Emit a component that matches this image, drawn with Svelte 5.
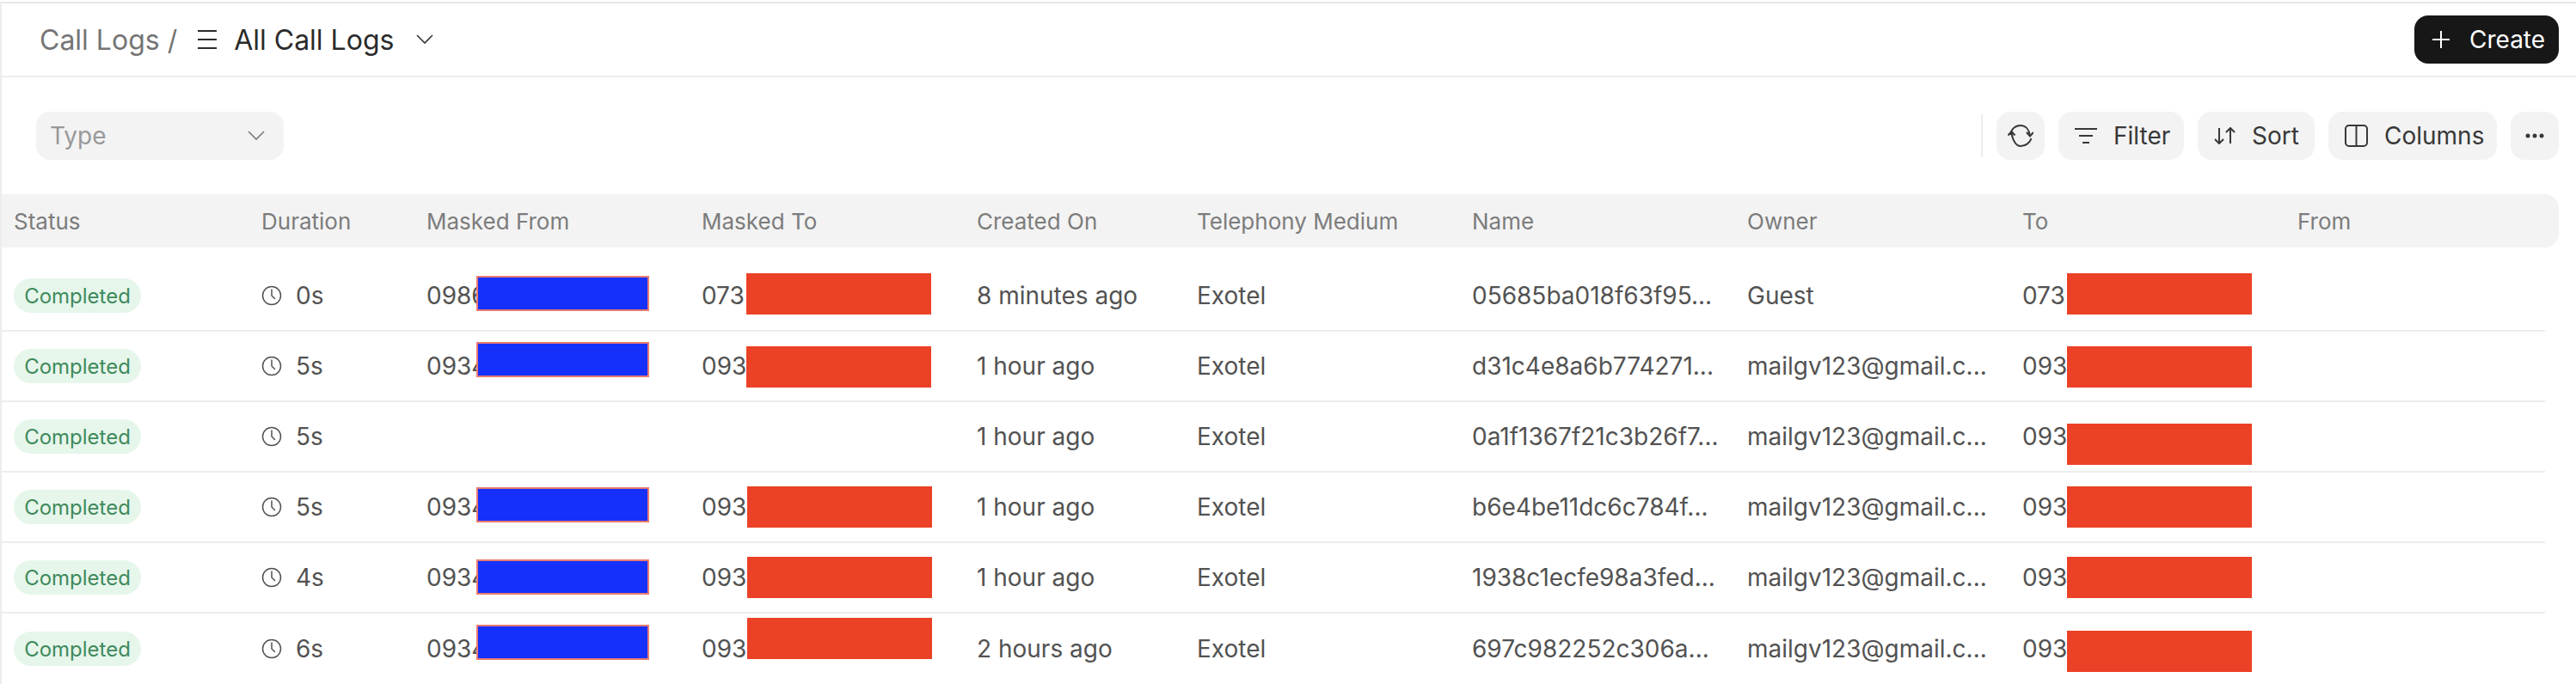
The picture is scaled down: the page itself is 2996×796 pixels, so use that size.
<script lang="ts">
  const columns = [
    { label: "Status", width: 288 },
    { label: "Duration", width: 192 },
    { label: "Masked From", width: 320 },
    { label: "Masked To", width: 320 },
    { label: "Created On", width: 256 },
    { label: "Telephony Medium", width: 320 },
    { label: "Name", width: 320 },
    { label: "Owner", width: 320 },
    { label: "To", width: 320 },
    { label: "From", width: 288 },
  ];

  const rows = [
    { dur: "0s", from: "0986", to: "073", own: "073", created: "8 minutes ago", name: "05685ba018f63f95...", owner: "Guest", fromTop: 17, toTop: 14, toLeft: 66, ownTop: 14 },
    { dur: "5s", from: "0934", to: "093", own: "093", created: "1 hour ago", name: "d31c4e8a6b774271...", owner: "mailgv123@gmail.c...", fromTop: 12, toTop: 17, toLeft: 66, ownTop: 17 },
    { dur: "5s", from: "", to: "", own: "093", created: "1 hour ago", name: "0a1f1367f21c3b26f7...", owner: "mailgv123@gmail.c...", fromTop: 0, toTop: 0, toLeft: 66, ownTop: 25 },
    { dur: "5s", from: "0934", to: "093", own: "093", created: "1 hour ago", name: "b6e4be11dc6c784f...", owner: "mailgv123@gmail.c...", fromTop: 17, toTop: 16, toLeft: 67, ownTop: 16 },
    { dur: "4s", from: "0934", to: "093", own: "093", created: "1 hour ago", name: "1938c1ecfe98a3fed...", owner: "mailgv123@gmail.c...", fromTop: 19, toTop: 16, toLeft: 67, ownTop: 16 },
    { dur: "6s", from: "0934", to: "093", own: "093", created: "2 hours ago", name: "697c982252c306a...", owner: "mailgv123@gmail.c...", fromTop: 13, toTop: 5, toLeft: 67, ownTop: 20 },
  ];
</script>

<div class="page">
  <header class="topbar">
    <div class="crumbs">
      <span class="crumb">Call Logs</span>
      <span class="crumb slash">/</span>
      <svg class="list-icon" width="22" height="22" viewBox="0 0 22 22" fill="none" stroke="#2b2b2b" stroke-width="2"><path d="M0 1h22M0 11h22M0 21h22" /></svg>
      <span class="view">All Call Logs</span>
      <svg class="chev" width="20" height="12" viewBox="0 0 20 12" fill="none" stroke="#383838" stroke-width="1.6"><path d="M1 1l9 9 9-9" /></svg>
    </div>
    <button class="create">
      <svg width="22" height="22" viewBox="0 0 22 22" fill="none" stroke="#fff" stroke-width="2"><path d="M11 1v20M1 11h20" /></svg>
      Create
    </button>
  </header>

  <div class="toolbar">
    <div class="select">
      <span>Type</span>
      <svg width="20" height="12" viewBox="0 0 20 12" fill="none" stroke="#7c7c7c" stroke-width="1.6"><path d="M1 1l9 9 9-9" /></svg>
    </div>
    <div class="actions">
      <div class="divider"></div>
      <button class="btn icon">
        <svg width="30" height="26" viewBox="0 0 30 26" fill="none" stroke="#383838" stroke-width="2"><path d="M3 12C4 5 9 1 15 1c6 0 10 5 11 12" /><path d="M4.500 8C5 18 10 25 15 25c6 0 11-4 12.500-9" /><path d="M22 9l4 4.500 4-4.500" /><path d="M0.500 12.500L4.500 8l4 4.500" /></svg>
      </button>
      <button class="btn filter">
        <svg width="26" height="18" viewBox="0 0 26 18" fill="none" stroke="#383838" stroke-width="2"><path d="M0 1h26M5 9h16M9 17h8" /></svg>
        Filter
      </button>
      <button class="btn sort">
        <svg width="25" height="20" viewBox="0 0 25 20" fill="none" stroke="#383838" stroke-width="2"><path d="M6 1v18M1 14l5 5 5-5" /><path d="M19 19V1M14 6l5-5 5 5" /></svg>
        Sort
      </button>
      <button class="btn cols">
        <svg width="27" height="26" viewBox="0 0 27 26" fill="none" stroke="#383838" stroke-width="2"><rect x="1" y="1" width="25" height="24" rx="4" /><path d="M13.500 1v24" /></svg>
        Columns
      </button>
      <button class="btn icon">
        <svg width="24" height="8" viewBox="0 0 24 8" fill="#383838"><circle cx="4" cy="4" r="2.500" /><circle cx="12" cy="4" r="2.500" /><circle cx="20" cy="4" r="2.500" /></svg>
      </button>
    </div>
  </div>

  <div class="table">
    <div class="head">
      {#each columns as col}
        <div class="head-cell" style="width: {col.width}px">{col.label}</div>
      {/each}
    </div>

    {#each rows as row}
      <div class="row">
        <div class="cell" style="width: 288px"><span class="pill">Completed</span></div>
        <div class="cell dur" style="width: 192px">
          <svg width="24" height="24" viewBox="0 0 24 24" fill="none" stroke="#525252" stroke-width="1.500" stroke-linecap="round"><circle cx="12" cy="12" r="10.500" /><path d="M12 5V12l3.500 3.500" /></svg>
          {row.dur}
        </div>
        <div class="cell" style="width: 320px">
          {row.from}
          {#if row.from}<span class="mask blue" style="top: {row.fromTop}px"></span>{/if}
        </div>
        <div class="cell" style="width: 320px">
          {row.to}
          {#if row.to}<span class="mask red" style="top: {row.toTop}px; left: {row.toLeft}px"></span>{/if}
        </div>
        <div class="cell" style="width: 256px">{row.created}</div>
        <div class="cell" style="width: 320px">Exotel</div>
        <div class="cell" style="width: 320px">{row.name}</div>
        <div class="cell" style="width: 320px">{row.owner}</div>
        <div class="cell" style="width: 320px">
          {row.own}
          <span class="mask red" style="top: {row.ownTop}px; left: 66px"></span>
        </div>
      </div>
    {/each}
  </div>
</div>

<style>
  :global(body) {
    background: #fff;
  }
  .page {
    width: 2996px;
    height: 794px;
    overflow: hidden;
    box-sizing: border-box;
    border-top: 2px solid #e8e8e8;
    margin-top: 2px;
    border-left: 2px solid #ededed;
    font-family: Inter, "Liberation Sans", sans-serif;
    color: #525252;
  }
  button {
    font-family: inherit;
    border: none;
    display: flex;
    align-items: center;
  }
  .topbar {
    height: 86px;
    box-sizing: border-box;
    border-bottom: 2px solid #ededed;
    display: flex;
    align-items: center;
    justify-content: space-between;
    padding: 0 20px 0 44px;
  }
  .crumbs {
    display: flex;
    align-items: center;
    font-size: 32px;
  }
  .crumb {
    color: #757575;
  }
  .slash {
    margin-left: 9px;
  }
  .list-icon {
    margin: 0 20px 0 24px;
  }
  .view {
    color: #2b2b2b;
  }
  .chev {
    margin-left: 26px;
  }
  .create {
    background: #171717;
    color: #fff;
    height: 56px;
    width: 168px;
    border-radius: 16px;
    font-size: 28px;
    gap: 22px;
    padding: 0 0 0 20px;
  }
  .toolbar {
    height: 96px;
    padding: 40px 20px 0 40px;
    display: flex;
    justify-content: space-between;
  }
  .select {
    width: 288px;
    height: 56px;
    background: #f3f3f3;
    border-radius: 16px;
    box-sizing: border-box;
    padding: 0 22px 0 16px;
    display: flex;
    align-items: center;
    justify-content: space-between;
    font-size: 28px;
    color: #999;
  }
  .actions {
    display: flex;
    align-items: center;
    gap: 16px;
    height: 56px;
  }
  .divider {
    width: 2px;
    height: 50px;
    background: #ededed;
  }
  .btn {
    height: 56px;
    background: #f3f3f3;
    border-radius: 16px;
    padding: 0 0 0 19px;
    gap: 19px;
    font-size: 28px;
    color: #383838;
  }
  .filter {
    width: 146px;
  }
  .sort {
    width: 136px;
  }
  .cols {
    width: 196px;
  }
  .btn.icon {
    width: 56px;
    padding: 0;
    justify-content: center;
  }
  .head {
    width: 2974px;
    height: 62px;
    background: #f3f3f3;
    border-radius: 0 16px 16px 0;
    display: flex;
    align-items: center;
    margin-bottom: 16px;
  }
  .head-cell {
    box-sizing: border-box;
    padding-left: 14px;
    font-size: 26px;
    color: #7c7c7c;
    flex: none;
  }
  .row {
    width: 2958px;
    height: 82px;
    box-sizing: border-box;
    border-bottom: 2px solid #ededed;
    display: flex;
    align-items: center;
  }
  .row:last-child {
    border-bottom: none;
  }
  .cell {
    box-sizing: border-box;
    padding-left: 14px;
    font-size: 28px;
    flex: none;
    position: relative;
    height: 100%;
    display: flex;
    align-items: center;
    white-space: nowrap;
  }
  .dur {
    gap: 16px;
  }
  .pill {
    width: 148px;
    height: 40px;
    border-radius: 20px;
    background: #e6f6eb;
    color: #3f8a5c;
    font-size: 24px;
    display: flex;
    align-items: center;
    justify-content: center;
  }
  .mask {
    position: absolute;
  }
  .blue {
    left: 72px;
    width: 201px;
    height: 41px;
    box-sizing: border-box;
    background: #1530fa;
    border: 2px solid #e87a70;
  }
  .red {
    width: 215px;
    height: 48px;
    background: #eb4126;
  }
</style>
